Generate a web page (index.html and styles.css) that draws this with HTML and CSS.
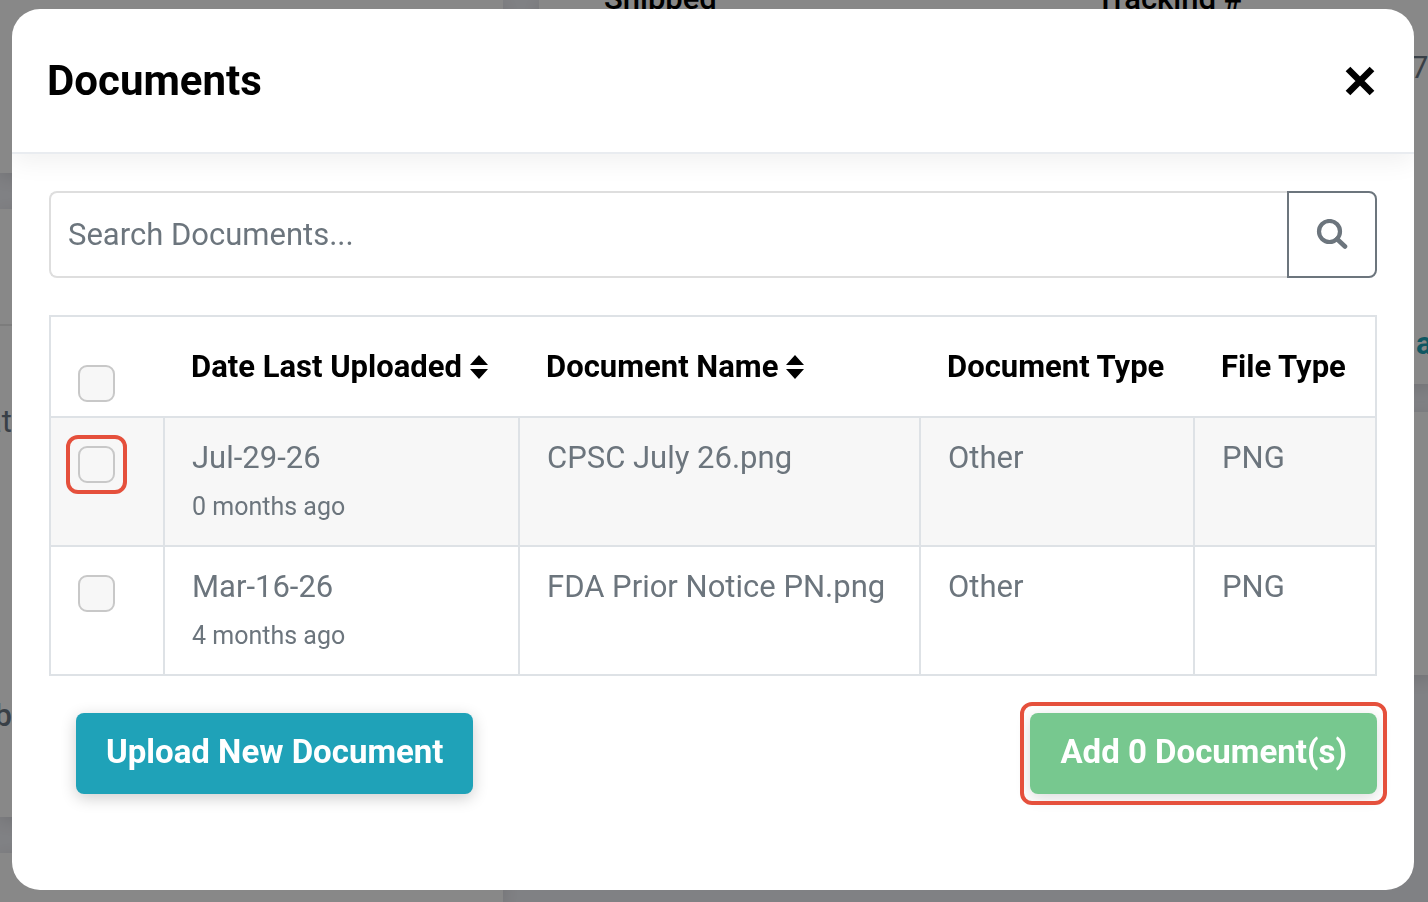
FILE: index.html
```html
<!DOCTYPE html>
<html lang="en">
<head>
<meta charset="utf-8">
<title>Documents</title>
<link rel="stylesheet" href="styles.css">
</head>
<body>
<div class="page">
  <div class="column column-left">
    <section class="card card-top"></section>
    <section class="card card-details">
      <hr class="divider">
      <p class="edge edge-label">at</p>
      <p class="edge edge-strong">b</p>
    </section>
    <section class="card card-rest"></section>
  </div>
  <div class="column column-right">
    <section class="card card-shipping">
      <div class="shipping-heads"><b>Shipped</b><b>Tracking #</b></div>
      <p class="shipping-number">7</p>
      <a class="shipping-link" href="#">a</a>
    </section>
    <section class="card card-items"></section>
  </div>
</div>

<div class="overlay">
  <div class="modal" role="dialog" aria-labelledby="modal-title">
    <header class="modal-header">
      <h1 class="modal-title" id="modal-title">Documents</h1>
      <button class="close" type="button" aria-label="Close">
        <svg width="32" height="32" viewBox="0 0 32 32"><path d="M4 4L28 28M28 4L4 28" fill="none" stroke="#000" stroke-width="6.600"/></svg>
      </button>
    </header>
    <div class="modal-body">
      <form class="search">
        <input class="search-input" type="text" placeholder="Search Documents..." aria-label="Search Documents">
        <button class="search-button" type="button" aria-label="Search">
          <svg width="32" height="32" viewBox="0 0 32 32" fill="none" stroke="#6c757d"><circle cx="13.500" cy="12.500" r="10.500" stroke-width="4.200"/><path d="M21 20L29 27.500" stroke-width="4.600" stroke-linecap="round"/></svg>
        </button>
      </form>
      <table class="documents">
        <colgroup><col class="col-check"><col class="col-date"><col class="col-name"><col class="col-type"><col></colgroup>
        <thead>
          <tr>
            <th class="check-cell"><input class="check" type="checkbox" aria-label="Select all"></th>
            <th>Date Last Uploaded <svg class="sort" width="18" height="24" viewBox="0 0 18 24"><path d="M9 0L18 10H0zM0 14H18L9 24z"/></svg></th>
            <th>Document Name <svg class="sort" width="18" height="24" viewBox="0 0 18 24"><path d="M9 0L18 10H0zM0 14H18L9 24z"/></svg></th>
            <th>Document Type</th>
            <th>File Type</th>
          </tr>
        </thead>
        <tbody>
          <tr>
            <td class="check-cell"><span class="marked marked-check"><input class="check" type="checkbox" aria-label="Select CPSC July 26.png"></span></td>
            <td>Jul-29-26<small class="age">0 months ago</small></td>
            <td>CPSC July 26.png</td>
            <td>Other</td>
            <td>PNG</td>
          </tr>
          <tr>
            <td class="check-cell"><input class="check" type="checkbox" aria-label="Select FDA Prior Notice PN.png"></td>
            <td>Mar-16-26<small class="age">4 months ago</small></td>
            <td>FDA Prior Notice PN.png</td>
            <td>Other</td>
            <td>PNG</td>
          </tr>
        </tbody>
      </table>
      <div class="actions">
        <button class="button button-upload" type="button">Upload New Document</button>
        <span class="marked"><button class="button button-add" type="button">Add 0 Document(s)</button></span>
      </div>
    </div>
  </div>
</div>
</body>
</html>
```
FILE: styles.css
```css
* { box-sizing: border-box; }

body {
  margin: 0;
  font-family: Roboto, "Liberation Sans", sans-serif;
  font-size: 31px;
  line-height: 40px;
  color: #6c757d;
}

/* Dimmed page behind the dialog */
.page {
  display: flex;
  gap: 36px;
  height: 100vh;
  overflow: hidden;
  background: #808184;
}
.column { display: flex; flex-direction: column; gap: 36px; }
.column-left { width: 503px; flex: none; }
.column-right { flex: 1; gap: 28px; }
.card { background: #888; box-shadow: 0 4px 16px rgba(0, 0, 0, .12); }
.card-top { height: 173px; flex: none; }
.card-details { height: 608px; flex: none; padding-top: 115px; }
.card-rest { flex: 1; }
.divider { margin: 0; border: 0; border-top: 2px solid #7c7c7c; }
.edge { display: flex; justify-content: flex-end; width: 12px; margin: 0; color: #394047; }
.edge-label { padding-top: 76px; }
.edge-strong { padding-top: 254px; font-weight: 500; }
.card-shipping { height: 384px; flex: none; overflow: hidden; }
.card-items { height: 263px; flex: none; }
.shipping-heads {
  display: grid;
  grid-template-columns: 492px 1fr;
  margin-top: -21px;
  padding-left: 65px;
  color: #000;
}
.shipping-heads b { font-weight: 500; }
.shipping-number { margin: 0; padding: 29px 0 0 872px; color: #394047; }
.shipping-link {
  display: block;
  padding: 236px 0 0 877px;
  color: #0f5762;
  font-weight: 700;
  text-decoration: none;
}

/* Dialog */
.overlay { position: fixed; inset: 0; padding: 9px 14px 12px 12px; }
.modal {
  display: flex;
  flex-direction: column;
  min-height: 100%;
  overflow: hidden;
  border-radius: 28px;
  background: #fff;
}
.modal-header {
  display: flex;
  align-items: center;
  justify-content: space-between;
  padding: 46px 38px 46px 35px;
  border-bottom: 2px solid #e9ecf0;
  box-shadow: 0 8px 24px rgba(0, 0, 0, .06);
}
.modal-title { margin: 0; font-size: 42px; line-height: 51px; font-weight: 700; color: #000; }
.close { display: flex; padding: 0; border: 0; background: none; }
.modal-body { padding: 37px; }

.search { display: flex; height: 87px; }
.search-input {
  flex: 1;
  min-width: 0;
  padding: 0 17px;
  border: 2px solid #dedede;
  border-right: 0;
  border-radius: 8px 0 0 8px;
  background: #fff;
  font: inherit;
  color: #495057;
}
.search-input::placeholder { color: #6c757d; opacity: 1; }
.search-button {
  display: flex;
  align-items: center;
  justify-content: center;
  width: 90px;
  padding: 0;
  border: 2px solid #6c757d;
  border-radius: 0 8px 8px 0;
  background: #fff;
}

.documents {
  width: 100%;
  margin-top: 37px;
  border: 2px solid #dee2e6;
  border-collapse: collapse;
  table-layout: fixed;
}
.col-check { width: 114px; }
.col-date { width: 355px; }
.col-name { width: 401px; }
.col-type { width: 274px; }
.documents th {
  height: 101px;
  padding: 0 0 0 27px;
  border-bottom: 2px solid #dee2e6;
  color: #000;
  font-weight: 700;
  text-align: left;
  white-space: nowrap;
}
.documents td {
  height: 129px;
  padding: 20px 0 0 27px;
  border: 2px solid #dee2e6;
  vertical-align: top;
  white-space: nowrap;
}
.documents tbody tr:first-child { background: #f7f7f7; }
.documents .check-cell { padding: 28px 0 0 27px; }
.documents th.check-cell { padding-top: 34px; }
.age { display: block; padding-top: 11px; font-size: 25px; line-height: 36px; }
.check {
  display: block;
  width: 37px;
  height: 37px;
  margin: 0;
  appearance: none;
  border: 2px solid #c8c8c8;
  border-radius: 9px;
  background: #f7f7f7;
}
.sort { fill: #000; vertical-align: -2px; }

/* Red frame drawn around a highlighted control */
.marked { position: relative; display: inline-block; vertical-align: top; }
.marked::after {
  content: "";
  position: absolute;
  inset: -11px -10px;
  border: 4px solid #e5503c;
  border-radius: 12px;
  pointer-events: none;
}
.marked-check::after { inset: -11px -12px; }

.actions {
  display: flex;
  justify-content: space-between;
  padding: 37px 0 0 27px;
}
.button {
  height: 81px;
  padding: 0 30px 4px;
  border: 0;
  border-radius: 8px;
  box-shadow: 0 4px 16px rgba(0, 0, 0, .2);
  color: #fff;
  font: inherit;
  font-size: 33px;
  font-weight: 700;
}
.button-upload { background: #1fa2b8; }
.button-add { background: #77c88f; box-shadow: 0 4px 16px rgba(0, 0, 0, .14); }
```
